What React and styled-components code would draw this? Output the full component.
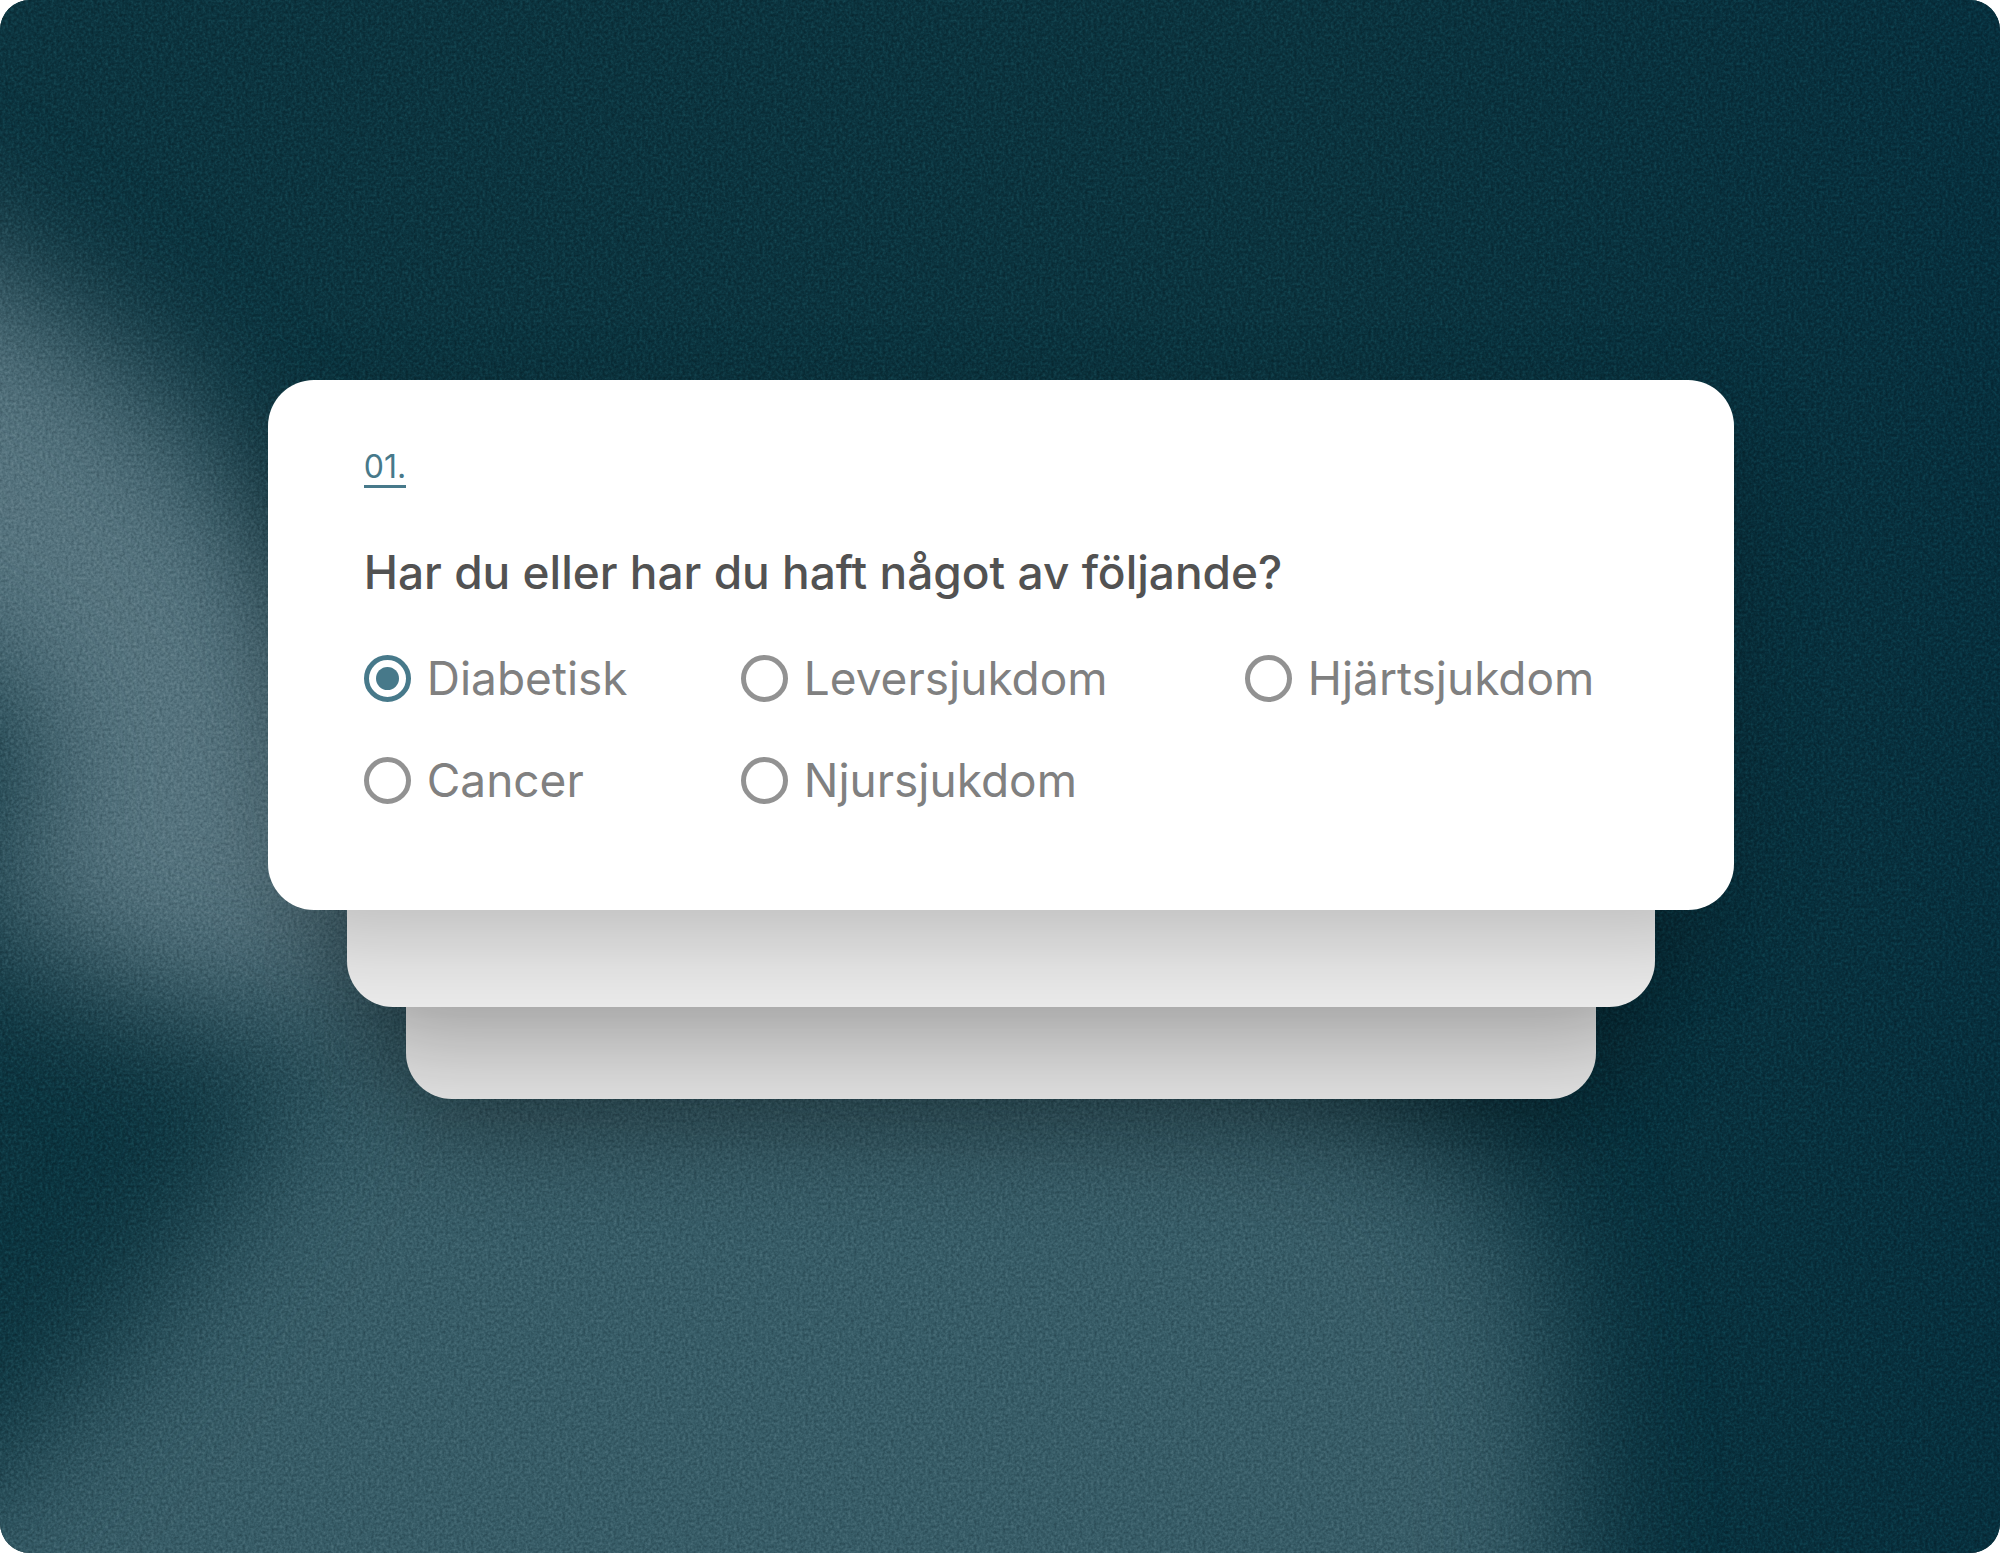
import React, { useState } from "react";
import styled, { createGlobalStyle } from "styled-components";

const GlobalStyle = createGlobalStyle`
  *, *::before, *::after { box-sizing: border-box; }
  body {
    margin: 0;
    background: #ffffff;
    font-family: Inter, "Liberation Sans", Arial, sans-serif;
  }
`;

const Stage = styled.main`
  position: relative;
  isolation: isolate;
  overflow: hidden;
  min-height: 100vh;
  border-radius: 30px;
  background: #0a303b;
  display: flex;
  flex-direction: column;
  align-items: center;
  padding: 380px 0 120px 2px;
`;

const Backdrop = styled.svg`
  position: absolute;
  inset: 0;
  z-index: -1;
  width: 100%;
  height: 100%;
`;

const Grain = styled.rect`
  mix-blend-mode: soft-light;
`;

const Card = styled.form`
  position: relative;
  z-index: 3;
  width: 73.4%;
  border-radius: 46px;
  background: #ffffff;
  box-shadow: 0 32px 90px rgba(0, 0, 0, 0.2);
  padding: 69px 96px 102px;
`;

const Sheet = styled.div`
  position: relative;
  z-index: ${(p) => p.$layer};
  width: ${(p) => p.$width};
  height: ${(p) => p.$height};
  margin-top: -60px;
  border-radius: 0 0 46px 46px;
  background: ${(p) => p.$color};
  box-shadow: 0 36px 100px rgba(0, 0, 0, 0.3);
`;

const Step = styled.p`
  margin: 0;
  width: max-content;
  border-bottom: 3px solid #47798a;
  color: #47798a;
  font-size: 32px;
  line-height: 36px;
`;

const Question = styled.fieldset`
  margin: 0;
  padding: 0;
  border: 0;
  min-width: 0;
`;

const Title = styled.legend`
  padding: 56px 0 0;
  color: #525252;
  font-size: 46px;
  font-weight: 500;
  line-height: 56px;
`;

const Options = styled.div`
  display: grid;
  grid-template-columns: 377px 504px 1fr;
  row-gap: 46px;
  padding-top: 50px;
`;

const Option = styled.label`
  display: flex;
  align-items: center;
  gap: 16px;
  color: #808080;
  font-size: 46px;
  line-height: 56px;
  cursor: pointer;
`;

const Radio = styled.input`
  appearance: none;
  flex: none;
  display: grid;
  place-items: center;
  width: 47px;
  height: 47px;
  margin: 0;
  border: 5px solid #929292;
  border-radius: 50%;
  background: #ffffff;
  cursor: pointer;

  &:checked { border-color: #47798a; }
  &:checked::before {
    content: "";
    width: 23px;
    height: 23px;
    border-radius: 50%;
    background: #47798a;
  }
`;

const conditions = ["Diabetisk", "Leversjukdom", "Hjärtsjukdom", "Cancer", "Njursjukdom"];

export default function App() {
  const [selected, setSelected] = useState("Diabetisk");

  return (
    <>
      <GlobalStyle />
      <Stage>
        <Backdrop viewBox="0 0 2000 1553" preserveAspectRatio="none" aria-hidden="true">
          <defs>
            <linearGradient id="base" x1="0" y1="0" x2="1" y2="0">
              <stop offset="0" stopColor="#0c343f" />
              <stop offset="0.65" stopColor="#0b333e" />
              <stop offset="1" stopColor="#072f3d" />
            </linearGradient>
            <filter id="soft" filterUnits="userSpaceOnUse" x="-400" y="-200" width="2800" height="2200" colorInterpolationFilters="sRGB">
              <feGaussianBlur stdDeviation="68" />
            </filter>
            <filter id="grain" filterUnits="userSpaceOnUse" x="0" y="0" width="2000" height="1553" colorInterpolationFilters="sRGB">
              <feTurbulence type="fractalNoise" baseFrequency="0.35" numOctaves="2" seed="4" />
              <feColorMatrix values="1 0 0 0 0  1 0 0 0 0  1 0 0 0 0  0 0 0 0 1" />
            </filter>
          </defs>
          <rect width="2000" height="1553" fill="url(#base)" />
          <g filter="url(#soft)">
            <path
              fill="#56747f"
              d="M-300 70 L-60 250 C80 320 180 410 280 560 C370 700 420 850 400 980 C320 1020 210 1030 110 980 C60 950 -20 900 -80 910 L-80 890 C30 870 60 780 10 710 C-20 660 -120 620 -300 620 Z"
            />
            <path
              fill="#375c67"
              d="M-300 1740 L-40 1500 C110 1380 200 1250 270 1130 C310 1060 340 1000 400 960 L1200 1020 C1400 1060 1500 1160 1540 1300 C1560 1400 1570 1500 1570 1800 Z"
            />
          </g>
          <Grain width="2000" height="1553" filter="url(#grain)" opacity="0.42" />
        </Backdrop>

        <Card>
          <Step>01.</Step>
          <Question>
            <Title>Har du eller har du haft något av följande?</Title>
            <Options>
              {conditions.map((name) => (
                <Option key={name}>
                  <Radio
                    type="radio"
                    name="condition"
                    value={name}
                    checked={selected === name}
                    onChange={() => setSelected(name)}
                  />
                  {name}
                </Option>
              ))}
            </Options>
          </Question>
        </Card>
        <Sheet $layer={2} $width="65.5%" $height="157px" $color="#ececec" />
        <Sheet $layer={1} $width="59.6%" $height="152px" $color="#e4e4e4" />
      </Stage>
    </>
  );
}
